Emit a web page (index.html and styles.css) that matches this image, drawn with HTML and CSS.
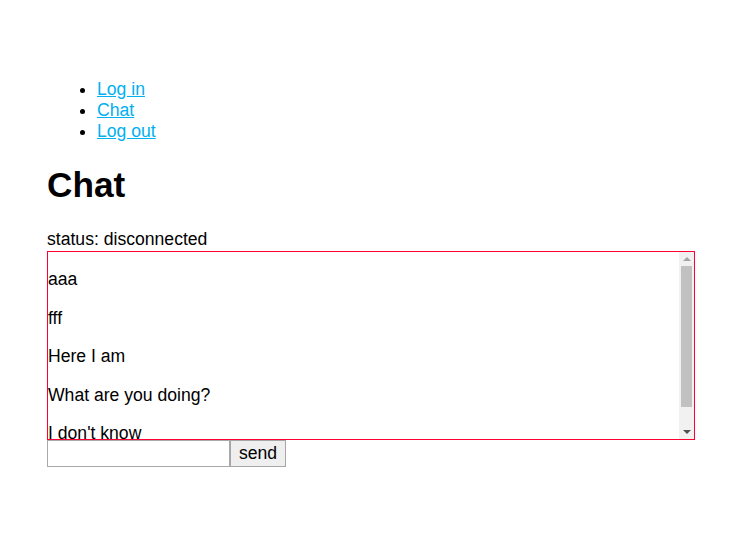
FILE: index.html
```html
<!DOCTYPE html>
<html>
<head>
<meta charset="utf-8">
<title>Chat</title>
<link rel="stylesheet" href="styles.css">
</head>
<body>
<div class="page">
  <ul class="nav">
    <li><a href="#">Log in</a></li>
    <li><a href="#">Chat</a></li>
    <li><a href="#">Log out</a></li>
  </ul>
  <h1 class="title">Chat</h1>
  <div class="status">status: disconnected</div>
  <div class="messages">
    <div class="message-list">
      <p>aaa</p>
      <p>fff</p>
      <p>Here I am</p>
      <p>What are you doing?</p>
      <p>I don't know</p>
    </div>
    <div class="scrollbar">
      <div class="sb-btn"><span class="arrow-up"></span></div>
      <div class="sb-track"><div class="sb-thumb"></div></div>
      <div class="sb-btn"><span class="arrow-down"></span></div>
    </div>
  </div>
  <form class="composer">
    <input class="msg-input" type="text"><button class="send-btn" type="button">send</button>
  </form>
</div>
</body>
</html>
```

FILE: styles.css
```css
html, body {
  margin: 0;
  padding: 0;
  background: #fff;
}
body {
  font-family: "Liberation Sans", Arial, sans-serif;
  font-size: 17.6px;
  line-height: 21px;
  color: #000;
}
.page {
  padding: 61px 51px 0 47px;
}
.nav {
  margin: 18px 0 0;
  padding-left: 50px;
}
.nav a {
  color: #00b0f0;
  text-decoration: underline;
}
.title {
  font-size: 35.2px;
  line-height: 40px;
  font-weight: bold;
  margin: 23px 0 24px;
}
.status {
  height: 22px;
}
.messages {
  border: 1px solid #ff0033;
  background: #fff;
  height: 187px;
  display: flex;
}
.message-list {
  flex: 1;
  overflow: hidden;
  background: #fff;
}
.message-list p {
  margin: 17px 0 17.5px;
}
.scrollbar {
  width: 15px;
  background: #f1f1f1;
  display: flex;
  flex-direction: column;
}
.sb-btn {
  height: 14px;
  display: flex;
  align-items: center;
  justify-content: center;
}
.arrow-up {
  width: 0;
  height: 0;
  border-left: 4px solid transparent;
  border-right: 4px solid transparent;
  border-bottom: 4px solid #a3a3a3;
}
.arrow-down {
  width: 0;
  height: 0;
  border-left: 4px solid transparent;
  border-right: 4px solid transparent;
  border-top: 4px solid #505050;
}
.sb-track {
  flex: 1;
  padding: 0 2px;
}
.sb-thumb {
  height: 141px;
  background: #c1c1c1;
}
.composer {
  margin: 0;
  display: flex;
  align-items: stretch;
}
.msg-input {
  width: 183px;
  height: 27px;
  box-sizing: border-box;
  margin: 0;
  border: 1px solid #a9a9a9;
  font: inherit;
  padding: 1px 2px;
}
.send-btn {
  height: 27px;
  width: 56px;
  box-sizing: border-box;
  margin: 0;
  font: inherit;
  line-height: 21px;
  padding: 1px 6px 1px;
  border: 1px solid #a6a6a6;
  background: #efefef;
  color: #000;
}
```
